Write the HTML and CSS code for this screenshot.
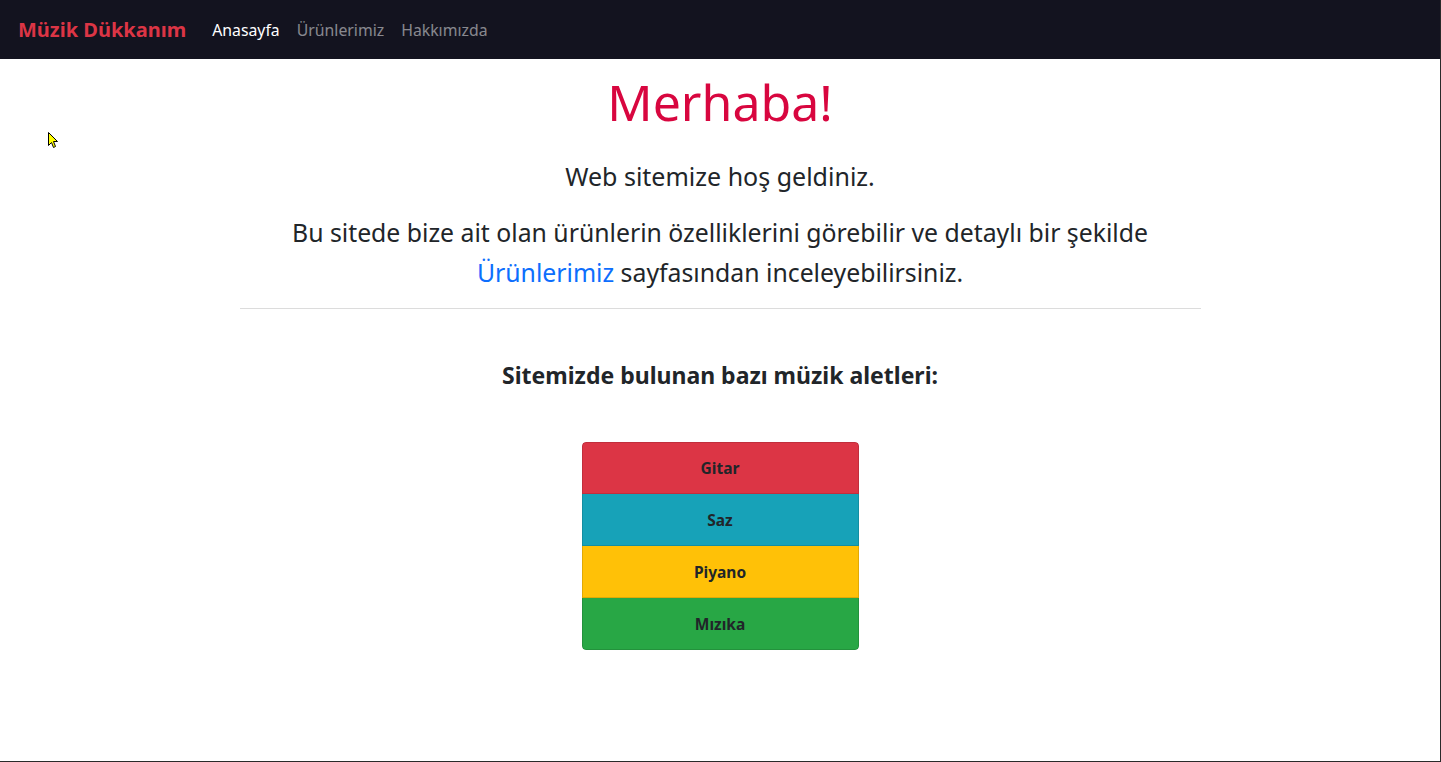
FILE: index.html
```html
<!DOCTYPE html>
<html lang="tr">
<head>
<meta charset="utf-8">
<title>Müzik Dükkanım</title>
<link rel="stylesheet" href="styles.css">
</head>
<body>
<div class="page">
  <nav class="navbar">
    <a class="brand" href="#">Müzik Dükkanım</a>
    <ul class="nav">
      <li><a class="nav-link active" href="#">Anasayfa</a></li>
      <li><a class="nav-link" href="#">Ürünlerimiz</a></li>
      <li><a class="nav-link" href="#">Hakkımızda</a></li>
    </ul>
  </nav>
  <main class="main">
    <h1 class="title">Merhaba!</h1>
    <p class="lead">Web sitemize hoş geldiniz.</p>
    <p class="lead lead-long">Bu sitede bize ait olan ürünlerin özelliklerini görebilir ve detaylı bir şekilde <a href="#" class="link">Ürünlerimiz</a> sayfasından inceleyebilirsiniz.</p>
    <hr class="divider">
    <h4 class="subtitle">Sitemizde bulunan bazı müzik aletleri:</h4>
    <ul class="list">
      <li class="item item-red">Gitar</li>
      <li class="item item-cyan">Saz</li>
      <li class="item item-yellow">Piyano</li>
      <li class="item item-green">Mızıka</li>
    </ul>
  </main>
  <svg class="cursor" width="12" height="18" viewBox="0 0 12 18"><path d="M0.5 0.5 L0.5 13.5 L3.5 10.5 L5.5 15.5 L7.5 14.5 L5.5 9.5 L9.5 9.5 Z" fill="#ffff00" stroke="#000" stroke-width="1"/></svg>
</div>
</body>
</html>
```
FILE: styles.css
```css
html, body {
  margin: 0;
  padding: 0;
  background: #fff;
}
body {
  font-family: "Noto Sans", "Open Sans", sans-serif;
  color: #212529;
}
.page {
  position: relative;
  width: 1441px;
  height: 762px;
  box-sizing: border-box;
  border-right: 1px solid #2a2a2a;
  border-bottom: 1px solid #2a2a2a;
  overflow: hidden;
}
.navbar {
  height: 59px;
  background: #13131f;
  display: flex;
  align-items: center;
  padding: 0 18px;
  box-sizing: border-box;
}
.brand {
  color: #dc3545;
  font-weight: 700;
  font-size: 20px;
  text-decoration: none;
  margin-right: 26px;
}
.nav {
  display: flex;
  list-style: none;
  margin: 0;
  padding: 0;
  gap: 17px;
}
.nav-link {
  color: rgba(255, 255, 255, 0.5);
  font-size: 15.8px;
  text-decoration: none;
}
.nav-link.active {
  color: #fff;
}
.main {
  display: flex;
  flex-direction: column;
  align-items: center;
  text-align: center;
}
.title {
  margin: 11px 0 0;
  font-size: 50px;
  font-weight: 400;
  line-height: 64px;
  color: #d8063f;
}
.lead {
  margin: 22px 0 0;
  font-size: 25px;
  line-height: 40px;
}
.lead-long {
  margin-top: 16px;
  width: 920px;
  font-size: 24.8px;
}
.link {
  color: #0d6efd;
  text-decoration: none;
}
.divider {
  width: 961px;
  margin: 16px 0 0;
  border: 0;
  border-top: 1px solid #dcdcdc;
}
.subtitle {
  margin: 49px 0 0;
  font-size: 23px;
  font-weight: 700;
  line-height: 34px;
}
.list {
  list-style: none;
  margin: 50px 0 0;
  padding: 0;
  width: 277px;
  border-radius: 4px;
  overflow: hidden;
}
.item {
  height: 52px;
  box-sizing: border-box;
  display: flex;
  align-items: center;
  justify-content: center;
  font-size: 15.5px;
  font-weight: 700;
  color: #212529;
  border: 1px solid rgba(0, 0, 0, 0.12);
  border-top-width: 0;
}
.item:first-child {
  border-top-width: 1px;
  border-radius: 4px 4px 0 0;
}
.item:last-child {
  border-radius: 0 0 4px 4px;
}
.item-red { background: #dc3545; }
.item-cyan { background: #17a2b8; }
.item-yellow { background: #ffc107; }
.item-green { background: #28a745; }
.cursor {
  position: absolute;
  left: 48px;
  top: 132px;
}
```
